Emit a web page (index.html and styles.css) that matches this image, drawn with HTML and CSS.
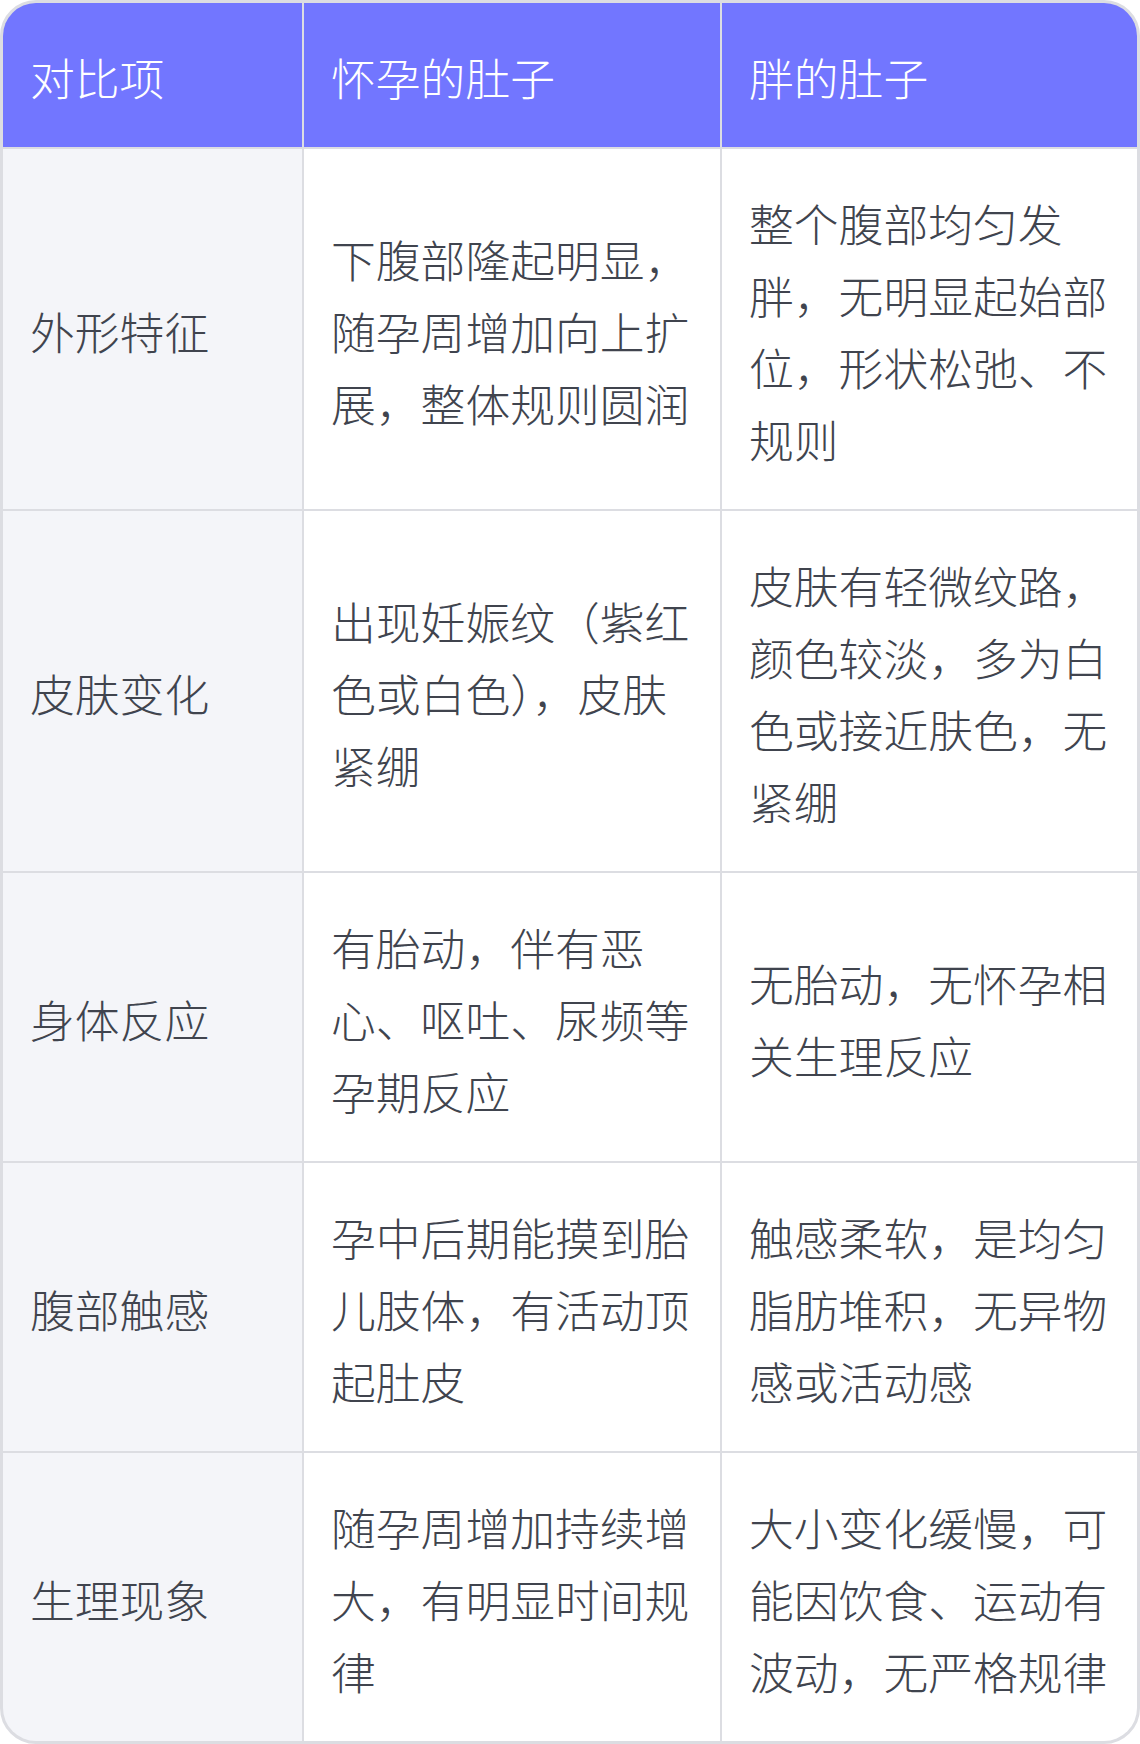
FILE: index.html
```html
<!DOCTYPE html>
<html lang="zh-CN">
<head>
<meta charset="utf-8">
<title>对比</title>
<link rel="stylesheet" href="styles.css">
</head>
<body>
<div class="table">
  <div class="cell head">对比项</div>
  <div class="cell head">怀孕的肚子</div>
  <div class="cell head">胖的肚子</div>

  <div class="cell label">外形特征</div>
  <div class="cell">下腹部隆起明显，随孕周增加向上扩展，整体规则圆润</div>
  <div class="cell">整个腹部均匀发胖，无明显起始部位，形状松弛、不规则</div>

  <div class="cell label">皮肤变化</div>
  <div class="cell">出现妊娠纹（紫红色或白色），皮肤紧绷</div>
  <div class="cell">皮肤有轻微纹路，颜色较淡，多为白色或接近肤色，无紧绷</div>

  <div class="cell label">身体反应</div>
  <div class="cell">有胎动，伴有恶心、呕吐、尿频等孕期反应</div>
  <div class="cell">无胎动，无怀孕相关生理反应</div>

  <div class="cell label">腹部触感</div>
  <div class="cell">孕中后期能摸到胎儿肢体，有活动顶起肚皮</div>
  <div class="cell">触感柔软，是均匀脂肪堆积，无异物感或活动感</div>

  <div class="cell label">生理现象</div>
  <div class="cell">随孕周增加持续增大，有明显时间规律</div>
  <div class="cell">大小变化缓慢，可能因饮食、运动有波动，无严格规律</div>
</div>
</body>
</html>
```

FILE: styles.css
```css
html, body {
  margin: 0;
  padding: 0;
  background: #ffffff;
}

.table {
  width: 1140px;
  box-sizing: border-box;
  border: 3px solid #dcdde2;
  border-radius: 36px;
  overflow: hidden;
  display: grid;
  grid-template-columns: 299px 416px 1fr;
  gap: 2px;
  background: #dcdde2;
  font-family: "Noto Sans CJK SC", "Noto Sans", sans-serif;
  font-size: 44.8px;
  font-weight: 300;
  line-height: 72px;
  color: #40444e;
}

.cell {
  background: #ffffff;
  padding: 38px 29px 34px 27px;
  display: flex;
  align-items: center;
  word-break: break-all;
}

.cell.head {
  background: #7276ff;
  color: #ffffff;
}

.cell.label {
  background: #f4f5f9;
}
```
